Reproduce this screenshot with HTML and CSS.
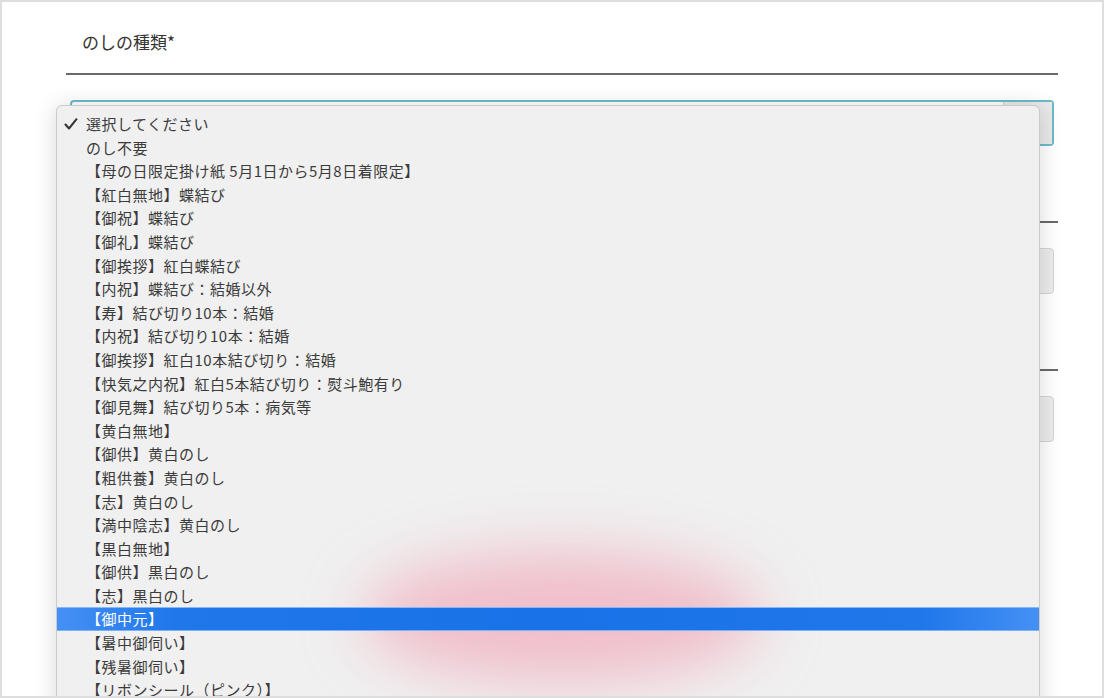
FILE: index.html
```html
<!DOCTYPE html>
<html lang="ja">

<head>
    <meta charset="UTF-8">
    <meta name="viewport" content="width=device-width, initial-scale=1.0">
    <title>のしの種類</title>
    <link rel="stylesheet" href="styles.css">
</head>

<body>

    <div class="page">
        <form class="form">
            <div class="field">
                <div class="field-label">のしの種類*</div>
                <div class="select-box"><span class="select-btn"></span></div>
            </div>
            <div class="field">
                <div class="field-label"></div>
                <div class="input-box"></div>
            </div>
            <div class="field">
                <div class="field-label"></div>
                <div class="input-box"></div>
            </div>
        </form>

        <!-- open select popup -->
        <div class="popup">
            <div class="blur-spot"></div>
            <ul class="options">
                <li class="option checked">
                    <svg class="check" width="14" height="12" viewBox="0 0 14 12">
                        <path d="M1.5 6.5 L5 10.5 L12.5 1.2" fill="none" stroke="#333" stroke-width="2" stroke-linecap="round" stroke-linejoin="round" />
                    </svg>
                    選択してください
                </li>
                <li class="option">のし不要</li>
                <li class="option">【母の日限定掛け紙 5月1日から5月8日着限定】</li>
                <li class="option">【紅白無地】蝶結び</li>
                <li class="option">【御祝】蝶結び</li>
                <li class="option">【御礼】蝶結び</li>
                <li class="option">【御挨拶】紅白蝶結び</li>
                <li class="option">【内祝】蝶結び：結婚以外</li>
                <li class="option">【寿】結び切り10本：結婚</li>
                <li class="option">【内祝】結び切り10本：結婚</li>
                <li class="option">【御挨拶】紅白10本結び切り：結婚</li>
                <li class="option">【快気之内祝】紅白5本結び切り：熨斗鮑有り</li>
                <li class="option">【御見舞】結び切り5本：病気等</li>
                <li class="option">【黄白無地】</li>
                <li class="option">【御供】黄白のし</li>
                <li class="option">【粗供養】黄白のし</li>
                <li class="option">【志】黄白のし</li>
                <li class="option">【満中陰志】黄白のし</li>
                <li class="option">【黒白無地】</li>
                <li class="option">【御供】黒白のし</li>
                <li class="option">【志】黒白のし</li>
                <li class="option active">【御中元】</li>
                <li class="option">【暑中御伺い】</li>
                <li class="option">【残暑御伺い】</li>
                <li class="option">【リボンシール（ピンク）】</li>
            </ul>
        </div>
    </div>

</body>
</html>
```

FILE: styles.css
```css
html,
body {
    margin: 0;
    padding: 0;
    background: #fff;
}

body {
    font-family: "Noto Sans CJK JP", "Noto Sans", sans-serif;
    color: #333;
}

.page {
    position: relative;
    width: 1104px;
    height: 698px;
    box-sizing: border-box;
    border: 2px solid #dedede;
    overflow: hidden;
    background: #fff;
}

.form {
    padding: 0 44px 0 64px;
}

.field {
    margin-bottom: 4px;
}

.field-label {
    height: 73px;
    box-sizing: border-box;
    padding: 28px 0 0 16px;
    line-height: 24px;
    font-size: 17px;
    color: #333;
    border-bottom: 2px solid #6a6a6a;
}

.select-box {
    position: relative;
    margin: 25px 4px 0 4px;
    height: 46px;
    box-sizing: border-box;
    border: 2px solid #6cb9cb;
    border-radius: 4px;
    background: #fff;
}

.select-btn {
    position: absolute;
    top: 0;
    right: 0;
    bottom: 0;
    width: 48px;
    background: #e9e9e9;
    border-left: 1px solid #cfcfcf;
}

.input-box {
    margin: 25px 4px 0 4px;
    height: 46px;
    box-sizing: border-box;
    border: 1px solid #d4d4d4;
    border-radius: 4px;
    background: #ececec;
}

.popup {
    position: absolute;
    left: 54px;
    top: 103px;
    width: 984px;
    height: 640px;
    box-sizing: border-box;
    padding-top: 6px;
    background: #f0f0f0;
    border: 1px solid #cbcbcb;
    border-radius: 6px 6px 0 0;
    box-shadow: 0 2px 22px rgba(0, 0, 0, 0.16);
    overflow: hidden;
}

.blur-spot {
    position: absolute;
    left: 305px;
    top: 446px;
    width: 400px;
    height: 130px;
    border-radius: 50%;
    background: rgba(240, 150, 172, 0.55);
    filter: blur(30px);
}

.options {
    position: relative;
    z-index: 1;
    list-style: none;
    margin: 0;
    padding: 0;
}

.option {
    position: relative;
    height: 23.6px;
    line-height: 23.6px;
    padding-left: 29px;
    font-size: 15px;
    letter-spacing: 0.5px;
    color: #3b3b3b;
    white-space: nowrap;
}

.check {
    position: absolute;
    left: 7px;
    top: 6px;
}

.option.active {
    color: #fff;
    background: linear-gradient(to right, #4590f5 0%, #1f77ea 12%, #1a72e8 50%, #1f77ea 88%, #4590f5 100%);
    box-shadow: inset 0 1px 0 #8ab8f6, inset 0 -1px 0 #7eb0f4;
}
```
